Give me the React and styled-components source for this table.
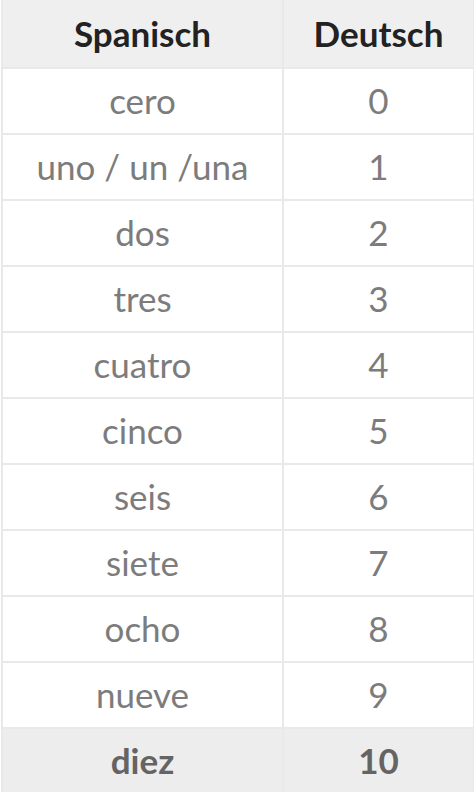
import React from 'react';
import styled, { createGlobalStyle } from 'styled-components';

const GlobalStyle = createGlobalStyle`
    html, body {
        margin: 0;
        padding: 0;
        background: #ffffff;
    }
    body {
        font-family: Lato, "Liberation Sans", sans-serif;
    }
`;

const Page = styled.div`
    width: 474px;
    height: 792px;
    padding: 0 1px;
    box-sizing: border-box;
`;

const Table = styled.table`
    width: 100%;
    border-collapse: collapse;
    table-layout: fixed;
`;

const Col = styled.col`
    width: ${props => props.width}px;
`;

const HeadCell = styled.th`
    height: 67px;
    padding: 0;
    background: #efefef;
    border: 2px solid #e9e9e9;
    border-top: none;
    color: #222222;
    font-size: 35px;
    font-weight: 700;
    line-height: 1;
    text-align: center;
    vertical-align: middle;
`;

const Cell = styled.td`
    height: 62px;
    padding: 0 0 2px;
    background: ${props => props.total ? '#ededed' : '#ffffff'};
    border: 2px solid #e9e9e9;
    color: ${props => props.total ? '#646464' : '#7c7c7c'};
    font-size: 35px;
    font-weight: ${props => props.total ? 700 : 400};
    line-height: 1;
    text-align: center;
    vertical-align: middle;
`;

const words = [
    ['cero', '0'],
    ['uno / un /una', '1'],
    ['dos', '2'],
    ['tres', '3'],
    ['cuatro', '4'],
    ['cinco', '5'],
    ['seis', '6'],
    ['siete', '7'],
    ['ocho', '8'],
    ['nueve', '9'],
];

const App = () => {
    return (
        <Page>
            <GlobalStyle/>
            <Table>
                <colgroup>
                    <Col width={281}/>
                    <Col width={191}/>
                </colgroup>
                <thead>
                    <tr>
                        <HeadCell>Spanisch</HeadCell>
                        <HeadCell>Deutsch</HeadCell>
                    </tr>
                </thead>
                <tbody>
                    {words.map(([es, de]) => (
                        <tr key={de}>
                            <Cell>{es}</Cell>
                            <Cell>{de}</Cell>
                        </tr>
                    ))}
                    <tr>
                        <Cell total>diez</Cell>
                        <Cell total>10</Cell>
                    </tr>
                </tbody>
            </Table>
        </Page>
    )
};

export default App;
